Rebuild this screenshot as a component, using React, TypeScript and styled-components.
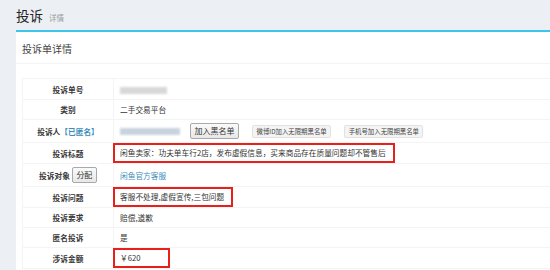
import React from "react";
import styled, { createGlobalStyle } from "styled-components";

const Global = createGlobalStyle`
  html, body { margin: 0; padding: 0; }
  body {
    background: #ecf0f5;
    font-family: "Noto Sans CJK SC", "Noto Sans", sans-serif;
    color: #333;
    overflow: hidden;
  }
`;

const Page = styled.div`
  width: 550px;
  height: 270px;
  overflow: hidden;
`;

const ContentHeader = styled.div`
  height: 30px;
  padding: 0 16px;
  display: flex;
  align-items: baseline;
  gap: 6px;
  box-sizing: border-box;
  padding-top: 5px;
`;

const H1 = styled.h1`
  margin: 0;
  font-size: 13.5px;
  font-weight: 400;
  color: #222;
  line-height: 20px;
`;

const Small = styled.small`
  font-size: 7.5px;
  color: #999;
`;

const Box = styled.div`
  margin-left: 16px;
  background: #fff;
  border-top: 2px solid #3ec5ee;
  height: 240px;
`;

const BoxHeader = styled.div`
  height: 32px;
  border-bottom: 1px solid #f4f4f4;
  padding: 0 6px;
  display: flex;
  align-items: center;
  font-size: 10px;
  color: #444;
  padding-top: 2px;
  box-sizing: border-box;
`;

const BoxBody = styled.div`
  padding: 14px 0 0 6px;
`;

const Table = styled.table`
  border-collapse: collapse;
  width: 560px;
  border: 1px solid #f4f4f4;
  font-size: 7.7px;
`;

const Row = styled.tr<{ $h: number }>`
  height: ${(p) => p.$h}px;
  border-bottom: 1px solid #f4f4f4;
`;

const Label = styled.td`
  width: 90px;
  border-right: 1px solid #f4f4f4;
  text-align: center;
  font-weight: 700;
  color: #3a3a3a;
  padding: 0;
  white-space: nowrap;
  vertical-align: middle;
`;

const Value = styled.td`
  padding: 0 0 0 6px;
  color: #333;
  vertical-align: middle;
  white-space: nowrap;
`;

const ValueLine = styled.div`
  display: flex;
  align-items: center;
`;

const Blur = styled.span<{ $w: number; $c: string }>`
  display: inline-block;
  width: ${(p) => p.$w}px;
  height: 7px;
  background: ${(p) => p.$c};
  filter: blur(1.2px);
  vertical-align: middle;
`;

const Anon = styled.span`
  color: #3c8dbc;
`;

const Button = styled.button<{ $ml?: number }>`
  font-family: inherit;
  font-size: 8px;
  font-weight: 400;
  color: #333;
  background: linear-gradient(#fafafa, #e8e8e8);
  border: 1px solid #a9a9a9;
  border-radius: 2px;
  height: 16px;
  padding: 0 3.5px;
  line-height: 14px;
  margin-left: ${(p) => p.$ml ?? 0}px;
  cursor: pointer;
`;

const SmallButton = styled.button`
  font-family: inherit;
  font-size: 6.4px;
  color: #444;
  background: #f4f4f4;
  border: 1px solid #e2e2e2;
  border-radius: 2px;
  height: 13px;
  padding: 0 3.5px;
  line-height: 11px;
  margin-left: 13px;
`;

const Link = styled.span`
  color: #3c8dbc;
`;

const Highlight = styled.span<{ $w?: number }>`
  display: inline-block;
  box-sizing: border-box;
  margin-left: -7px;
  border: 2px solid #e8201c;
  padding: 0 7px 0 5px;
  line-height: 16px;
  ${(p) => (p.$w ? `width: ${p.$w}px;` : "")}
`;

const LabelWithButton = styled.span`
  display: inline-flex;
  align-items: center;
  gap: 2px;
`;

export default function App() {
  return (
    <>
      <Global />
      <Page>
        <ContentHeader>
          <H1>投诉</H1>
          <Small>详情</Small>
        </ContentHeader>
        <Box>
          <BoxHeader>投诉单详情</BoxHeader>
          <BoxBody>
            <Table>
              <tbody>
                <Row $h={21}>
                  <Label>投诉单号</Label>
                  <Value>
                    <Blur $w={47} $c="#d8d8d8" />
                  </Value>
                </Row>
                <Row $h={20}>
                  <Label>类别</Label>
                  <Value>二手交易平台</Value>
                </Row>
                <Row $h={23}>
                  <Label>
                    投诉人<Anon>【已匿名】</Anon>
                  </Label>
                  <Value>
                    <ValueLine>
                      <Blur $w={60} $c="#c9d3de" />
                      <Button $ml={10}>加入黑名单</Button>
                      <SmallButton>微博ID加入无限期黑名单</SmallButton>
                      <SmallButton>手机号加入无限期黑名单</SmallButton>
                    </ValueLine>
                  </Value>
                </Row>
                <Row $h={21}>
                  <Label>投诉标题</Label>
                  <Value>
                    <Highlight>
                      闲鱼卖家：功夫单车行2店，发布虚假信息，买来商品存在质量问题却不管售后
                    </Highlight>
                  </Value>
                </Row>
                <Row $h={23}>
                  <Label>
                    <LabelWithButton>
                      投诉对象<Button>分配</Button>
                    </LabelWithButton>
                  </Label>
                  <Value>
                    <Link>闲鱼官方客服</Link>
                  </Value>
                </Row>
                <Row $h={21}>
                  <Label>投诉问题</Label>
                  <Value>
                    <Highlight>客服不处理,虚假宣传,三包问题</Highlight>
                  </Value>
                </Row>
                <Row $h={20}>
                  <Label>投诉要求</Label>
                  <Value>赔偿,道歉</Value>
                </Row>
                <Row $h={20}>
                  <Label>匿名投诉</Label>
                  <Value>是</Value>
                </Row>
                <Row $h={20}>
                  <Label>涉诉金额</Label>
                  <Value>
                    <Highlight $w={57}>￥620</Highlight>
                  </Value>
                </Row>
              </tbody>
            </Table>
          </BoxBody>
        </Box>
      </Page>
    </>
  );
}
